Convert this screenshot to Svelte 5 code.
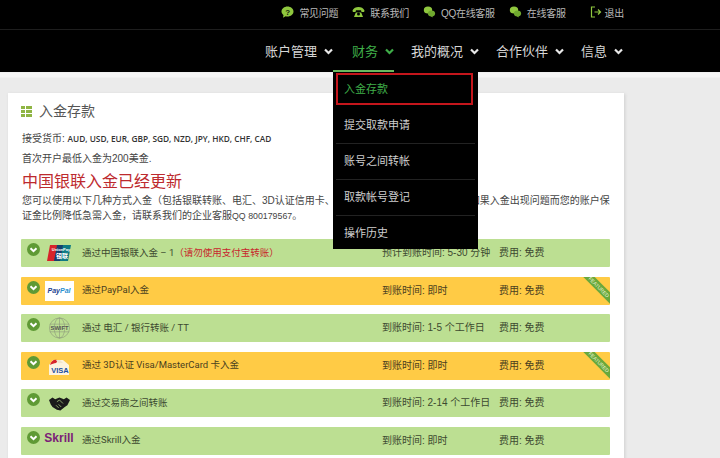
<script>
	const topLinks = [
		{ label: '常见问题', icon: 'help' },
		{ label: '联系我们', icon: 'phone' },
		{ label: 'QQ在线客服', icon: 'chat' },
		{ label: '在线客服', icon: 'chat' }
	];
	const navItems = ['账户管理', '财务', '我的概况', '合作伙伴', '信息'];
	const menuItems = ['入金存款', '提交取款申请', '账号之间转帐', '取款帐号登记', '操作历史'];
	const methods = [
		{ logo: 'unionpay', title: '通过中国银联入金 – 1', note: '（请勿使用支付宝转账）', time: '预计到账时间: 5-30 分钟' },
		{ logo: 'paypal', title: '通过PayPal入金', time: '到账时间: 即时', featured: true },
		{ logo: 'swift', title: '通过 电汇 / 银行转账 / TT', time: '到账时间: 1-5 个工作日' },
		{ logo: 'visa', title: '通过 3D认证 Visa/MasterCard 卡入金', time: '到账时间: 即时', featured: true },
		{ logo: 'hands', title: '通过交易商之间转账', time: '到账时间: 2-14 个工作日' },
		{ logo: 'skrill', title: '通过Skrill入金', time: '到账时间: 即时' }
	];
</script>

<div class="page">
	<div class="topbar">
		{#each topLinks as link}
			<span class="toplink">
				{#if link.icon === 'help'}
					<svg width="13" height="12" viewBox="0 0 13 12"><path d="M6.500 0.500c3.300 0 6 2.200 6 5s-2.700 5-6 5c-.7 0-1.300-.1-1.900-.3L2 11.800l.5-2.800C1.200 8 .5 6.800.5 5.500c0-2.800 2.700-5 6-5z" fill="#8fc73e"/><text x="6.500" y="8.500" font-size="8" font-weight="700" text-anchor="middle" fill="#10200a">?</text></svg>
				{:else if link.icon === 'phone'}
					<svg width="13" height="12" viewBox="0 0 13 12"><path d="M.5 4.500C1.500 2 4 1 6.500 1s5 1 6 3.500l-.4 1.500H9.500L9 4.200H4L3.500 6H.9z" fill="#8fc73e"/><path d="M3.800 6.500h5.400l1.800 4.500H2z" fill="#8fc73e"/><circle cx="6.500" cy="8" r="1.500" fill="#000"/></svg>
				{:else}
					<svg width="13" height="12" viewBox="0 0 13 12"><ellipse cx="5" cy="4" rx="4.200" ry="3.500" fill="#8fc73e"/><ellipse cx="8.500" cy="7.500" rx="3.600" ry="3" fill="#6fa82e"/><path d="M7 9.500l2.500 2 .2-2z" fill="#6fa82e"/></svg>
				{/if}
				{link.label}
			</span>
		{/each}
		<span class="toplink logout">
			<svg width="12" height="12" viewBox="0 0 12 12" fill="none" stroke="#8fc73e" stroke-width="1.200"><path d="M5 1H1.500v10H5"/><path d="M4.500 6h6M8 3.500 10.500 6 8 8.500"/></svg>
			退出
		</span>
	</div>

	<nav class="mainnav">
		{#each navItems as item, i}
			<span class="navitem" class:active={i === 1}>
				{item}
				<svg class="chev" width="9" height="7" viewBox="0 0 9 7" fill="none" stroke="currentColor" stroke-width="2.200"><path d="M1 1.500 4.500 5 8 1.500"/></svg>
			</span>
		{/each}
	</nav>

	<div class="dropdown">
		{#each menuItems as item, i}
			<div class="menuitem" class:current={i === 0}>{item}</div>
		{/each}
	</div>

	<main class="card">
		<h2 class="title">
			<svg width="11" height="11" viewBox="0 0 11 11" fill="#8fb544"><rect x="0" y="0" width="4" height="3"/><rect x="5" y="0" width="6" height="3"/><rect x="0" y="4" width="4" height="3"/><rect x="5" y="4" width="6" height="3"/><rect x="0" y="8" width="4" height="3"/><rect x="5" y="8" width="6" height="3"/></svg>
			入金存款
		</h2>
		<p class="currencies">接受货币: <b>AUD, USD, EUR, GBP, SGD, NZD, JPY, HKD, CHF, CAD</b></p>
		<p class="minimum">首次开户最低入金为200美金.</p>
		<h3 class="notice">中国银联入金已经更新</h3>
		<p class="intro">您可以使用以下几种方式入金（包括银联转账、电汇、3D认证信用卡、交易商之间转账及其他方式）。如果入金出现问题而您的账户保<br />证金比例降低急需入金，请联系我们的企业客服<span class="latin">QQ 800179567</span>。</p>

		<div class="methods">
			{#each methods as m}
				<div class="method" class:featured={m.featured}>
					<svg class="toggle" width="13" height="13" viewBox="0 0 13 13"><circle cx="6.500" cy="6.500" r="6.500" fill="#5f9a35"/><path d="M3.500 5.200 6.500 8.200 9.500 5.200" fill="none" stroke="#fff" stroke-width="2"/></svg>
					<span class="logo">
						{#if m.logo === 'unionpay'}
							<svg width="24" height="16" viewBox="0 0 24 16"><path d="M3 0h8L8 16H0z" fill="#d8232a"/><path d="M10 0h8l-3 16H7z" fill="#16406f"/><path d="M16 0h8l-3 16h-8z" fill="#0f7a83"/><text x="14" y="6" font-size="4" font-weight="700" text-anchor="middle" fill="#fff">UnionPay</text><text x="15" y="13" font-size="6" font-weight="700" text-anchor="middle" fill="#fff">银联</text></svg>
						{:else if m.logo === 'paypal'}
							<span class="paypal"><b>Pay</b><i>Pal</i></span>
						{:else if m.logo === 'swift'}
							<svg width="23" height="22" viewBox="0 0 24 22" fill="none" stroke="#8a957a" stroke-width=".6"><circle cx="12" cy="11" r="10.500"/><ellipse cx="12" cy="11" rx="5.500" ry="10.500"/><path d="M2 7h20M2 15h20M12 .5v21"/><text x="12" y="13" font-size="6" font-weight="700" text-anchor="middle" fill="#555" stroke="none">SWIFT</text></svg>
						{:else if m.logo === 'visa'}
							<span class="visa">
								<svg width="24" height="18" viewBox="0 0 24 18"><path d="M2 7 6 2h10l6 5v10H2z" fill="#fdf3df"/><path d="M3 7c1-4 4-6 7-5 1 1 0 2-1 3-2 0-4 1-6 2z" fill="#d8232a"/><path d="M9 2h4l3 3h-5z" fill="#f0e4d0"/><text x="13" y="15" font-size="7.500" font-weight="700" text-anchor="middle" fill="#1c4f9f">VISA</text></svg>
							</span>
						{:else if m.logo === 'hands'}
							<svg width="21" height="15" viewBox="0 0 24 16" fill="#1b1b1b"><path d="M0 4 4 1l3 2 5-2 5 2 3-2 4 3-3 6-3 2-5 4-4-1-5-3-2-3z"/><path d="M9 6l3-2 4 4M8 10l3 3M11 9l3 3" fill="none" stroke="#bddf90" stroke-width=".8"/></svg>
						{:else}
							<span class="skrill">Skrill</span>
						{/if}
					</span>
					<span class="mtitle">{m.title}{#if m.note}<span class="note">{m.note}</span>{/if}</span>
					<span class="mtime">{m.time}</span>
					<span class="mfee">费用: 免费</span>
					{#if m.featured}
						<span class="ribbon">FEATURED</span>
					{/if}
				</div>
			{/each}
		</div>
	</main>
</div>

<style>
	:global(body) {
		margin: 0;
		background: #ebebeb;
		font-family: "Liberation Sans", "Noto Sans CJK SC", sans-serif;
	}

	.page {
		position: relative;
		width: 720px;
		height: 458px;
		overflow: hidden;
		background: linear-gradient(#ebebeb 72px, #f5f5f5 73px, #f5f5f5 77px, #ebebeb 78px);
	}

	.topbar {
		display: flex;
		justify-content: flex-end;
		align-items: center;
		gap: 14px;
		box-sizing: border-box;
		height: 30px;
		padding: 0 96px 5px 0;
		background: #000;
		border-bottom: 1px solid #1e1e1e;
	}

	.toplink {
		display: flex;
		align-items: center;
		gap: 5px;
		color: #b9b9b9;
		font-size: 10px;
		letter-spacing: -0.3px;
	}

	.logout {
		margin-left: 10px;
		gap: 3px;
	}

	.mainnav {
		display: flex;
		justify-content: flex-end;
		box-sizing: border-box;
		height: 42px;
		padding: 13px 97px 0 0;
		background: #000;
	}

	.navitem {
		display: flex;
		align-items: flex-start;
		gap: 7px;
		height: 29px;
		padding-left: 17px;
		color: #d6d6d6;
		font-size: 13px;
		line-height: 17px;
	}

	.navitem.active {
		color: #3fae49;
		padding-left: 19px;
		box-shadow: inset 0 -2px 0 #69b95e;
	}

	.chev {
		margin-top: 5px;
		color: #e8e8e8;
	}

	.active .chev {
		color: #3fae49;
	}

	.dropdown {
		position: absolute;
		z-index: 2;
		left: 333px;
		top: 72px;
		width: 145px;
		height: 177px;
		background: #000;
	}

	.menuitem {
		box-sizing: border-box;
		height: 36px;
		margin: 0 3px;
		padding-left: 8px;
		color: #cfcfcf;
		font-size: 11px;
		line-height: 35px;
		border-bottom: 1px solid #222;
	}

	.menuitem:last-child {
		border-bottom: 0;
	}

	.menuitem.current {
		height: 32px;
		margin: 1px 5px 3px 3px;
		padding-left: 6px;
		color: #3fae49;
		line-height: 28px;
		border: 2px solid #c4161c;
	}

	.card {
		box-sizing: border-box;
		width: 616px;
		height: 400px;
		margin: 21px 0 0 8px;
		padding: 9px 14px 0 14px;
		background: #fff;
		box-shadow: 1px 1px 3px #cfcfcf;
	}

	.title {
		display: flex;
		align-items: center;
		gap: 7px;
		margin: 0 0 0 -1px;
		color: #555;
		font-size: 14px;
		font-weight: 400;
		line-height: 18px;
	}

	.currencies,
	.minimum,
	.intro {
		margin: 0;
		color: #444;
		font-size: 10px;
	}

	.currencies {
		margin-top: 12px;
		line-height: 14px;
	}

	.currencies b {
		font-family: "Open Sans", sans-serif;
		font-size: 8.300px;
		font-weight: 600;
		color: #333;
	}

	.minimum {
		margin-top: 6px;
		line-height: 14px;
	}

	.notice {
		margin: 4px 0 0;
		color: #bd2a2e;
		font-size: 16px;
		font-weight: 400;
		line-height: 23px;
	}

	.intro {
		margin-top: 1px;
		width: 590px;
		white-space: nowrap;
		line-height: 14.500px;
	}

	.latin {
		font-size: 8.800px;
	}

	.methods {
		display: flex;
		flex-direction: column;
		gap: 9.600px;
		margin-top: 16px;
		margin-left: -1px;
	}

	.method {
		position: relative;
		display: flex;
		align-items: center;
		flex: none;
		box-sizing: border-box;
		height: 28px;
		padding-bottom: 3px;
		background: #bcdf92;
		color: #3c4a30;
		font-size: 10px;
		border-radius: 1px;
		overflow: hidden;
	}

	.method.featured {
		background: #ffcb45;
		color: #4a4020;
	}

	.toggle {
		position: absolute;
		left: 6px;
		top: 4px;
	}

	.logo {
		display: flex;
		align-items: center;
		justify-content: center;
		flex: none;
		width: 30px;
		margin-top: 3px;
		margin-left: 23px;
	}

	.paypal {
		box-sizing: border-box;
		width: 29px;
		height: 20px;
		background: #fff;
		font-size: 7px;
		font-style: italic;
		line-height: 20px;
		text-align: center;
	}

	.paypal b {
		color: #1c3f8f;
	}

	.paypal i {
		color: #2a8fd0;
		font-weight: 700;
	}

	.visa {
		display: flex;
		margin-top: 2px;
	}

	.skrill {
		color: #7b2077;
		font-size: 12px;
		font-weight: 700;
		margin-top: -5px;
	}

	.mtitle {
		flex: none;
		width: 300px;
		margin-left: 8px;
		font-family: Roboto, "Noto Sans CJK SC", sans-serif;
		font-size: 9.500px;
	}

	.note {
		color: #c8262c;
	}

	.mtime {
		flex: none;
		width: 117px;
	}

	.mfee {
		flex: none;
	}

	.ribbon {
		position: absolute;
		top: 6.500px;
		right: -20.500px;
		width: 64px;
		height: 8px;
		background: #69a83c;
		color: #e8f5d8;
		font-size: 5px;
		line-height: 8px;
		text-align: center;
		transform: rotate(45deg);
	}
</style>
